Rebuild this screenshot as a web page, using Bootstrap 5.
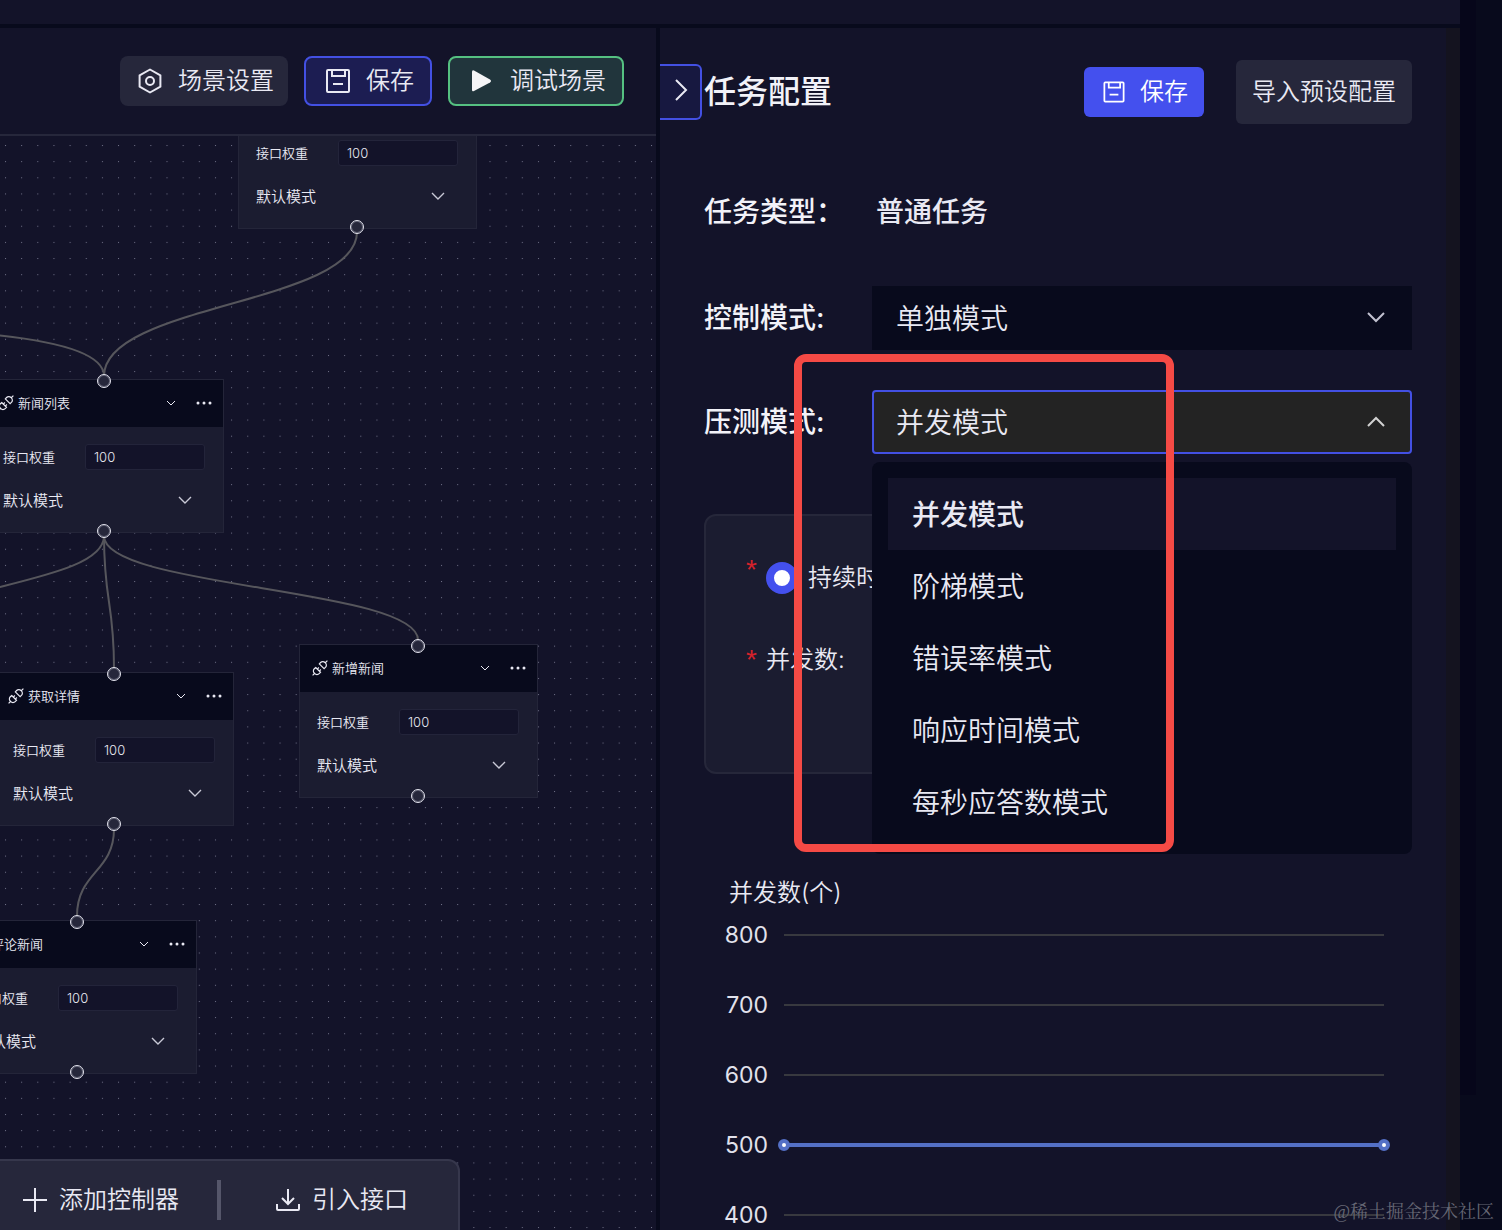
<!DOCTYPE html>
<html lang="zh-CN">
<head>
<meta charset="utf-8">
<meta name="viewport" content="width=device-width, initial-scale=1">
<title>场景管理 - 任务配置</title>
<link href="https://cdn.jsdelivr.net/npm/bootstrap@5.3.0/dist/css/bootstrap.min.css" rel="stylesheet">
<style>
:root{--bg:#131329;--deep:#080a1c;--panel:#1b1c30;--soft:#26273b;--ink:#e9e9f3;--blue:#4350e3}
body{background:var(--deep);color:var(--ink);font-family:Inter,"Noto Sans CJK SC",sans-serif;font-weight:350;font-size:24px;line-height:32px}
svg{display:block;flex:none}
.app{height:100vh;overflow:hidden}
.app-main{gap:4px;min-width:0}
.topbar{height:24px;background:var(--bg)}
.gutter{width:42px}
.gutter-shade{width:16px;height:1095px;background:#06061a}
.workspace{gap:4px;min-height:0}
.surface{background:var(--bg)}
.toolbar{height:108px;border-bottom:2px solid var(--soft);padding:0 32px 0 16px}
.tool-btn{--bs-btn-color:var(--ink);--bs-btn-hover-color:#fff;--bs-btn-border-radius:8px;font-size:24px;line-height:32px;font-weight:350;height:50px;padding:0 14px;gap:12px;border:0;background:var(--soft)}
.btn-save{background:#1c1d52;border:2px solid var(--blue);padding:0 16px}
.btn-run{background:#21353c;border:2px solid #55c081;padding:0 16px}
.btn-solid{background:#4450ee;color:#fff;padding:0 16px;border-radius:6px}
.btn-import{height:64px;padding:0 16px;border-radius:6px;margin-left:32px}
.board{min-height:0}
.board-lines{position:absolute;inset:0;width:100%;height:100%}
.flow-node{position:absolute;width:239px;height:154px;background:var(--panel);border:1px solid #242539;font-size:13px;line-height:20px}
.node-head{height:47px;background:var(--deep);padding:0 11px 0 12px}
.node-icon{margin-right:4px}
.icon-btn{background:none;border:0;padding:0;color:inherit}
.node-form{padding:17px 18px 0 17px}
.weight-box{width:120px;height:26px;background:var(--bg);border:1px solid #23243a;border-radius:3px;color:var(--ink);font-size:13px;font-weight:350;padding:0 8px}
.mode-pick{margin-top:19px;height:24px;width:100%;appearance:none;border:0;color:var(--ink);font-size:15px;font-weight:350;padding:0;background:transparent url("data:image/svg+xml,%3Csvg xmlns='http://www.w3.org/2000/svg' width='14' height='8' fill='none' stroke='%23c9c9d6' stroke-width='1.4'%3E%3Cpath d='M1 1l6 6 6-6'/%3E%3C/svg%3E") no-repeat right 13px top 7px}
.port{position:absolute;left:111px;width:14px;height:14px;border:1px solid #e4e4ee;box-shadow:inset 0 0 0 1px #5c5d70;border-radius:50%;background:var(--soft)}
.port-in{top:-6px}.port-out{bottom:-6px}
.at-root{left:238px;top:-61px}
.at-list{left:-15px;top:243px}
.at-detail{left:-5px;top:536px}
.at-create{left:299px;top:508px}
.at-comment{left:-42px;top:784px}
.dock{position:absolute;left:0;bottom:0;height:71px;padding:19px 50px 10px 20px;background:var(--soft);border:solid #36374c;border-width:2px 2px 0 0;border-radius:0 12px 0 0}
.dock .tool-btn{height:40px;padding:0;background:none;gap:9px}
.dock-rule{width:4px;height:40px;background:#55566a;margin:0 52px 0 38px}
.config{flex:0 0 800px;padding:32px 34px 0 44px;border-right:14px solid #14131f}
.fold-btn{position:absolute;left:0;top:36px;width:42px;height:56px;background:#171840;border:2px solid var(--blue);border-left:0;border-radius:0 6px 6px 0;padding:0 0 4px 12px;color:var(--ink)}
.config-title{font-size:32px;line-height:48px;font-weight:500;margin:0;color:#f2f2f8}
.task-row{margin-top:56px;margin-bottom:42px}
.form-line{min-height:64px;font-size:28px;line-height:40px}
.line-label{width:168px;font-weight:500;color:#f2f2f8;flex:none}
.line-value{font-weight:500;padding-left:4px}
.big-select{flex:1;height:64px;appearance:none;background:var(--deep) url("data:image/svg+xml,%3Csvg xmlns='http://www.w3.org/2000/svg' width='18' height='11' fill='none' stroke='%23c2c2d0' stroke-width='2'%3E%3Cpath d='M1 1l8 8 8-8'/%3E%3C/svg%3E") no-repeat right 25px center;border:2px solid var(--deep);color:var(--ink);font-size:28px;font-weight:350;padding:2px 22px 0}
.big-select.is-open{background-color:#232323;border-color:var(--blue);border-radius:4px;background-image:url("data:image/svg+xml,%3Csvg xmlns='http://www.w3.org/2000/svg' width='18' height='11' fill='none' stroke='%23d2d2d2' stroke-width='2'%3E%3Cpath d='M1 10l8-8 8 8'/%3E%3C/svg%3E")}
.pick-line{margin-top:40px;margin-bottom:60px}
.pick-menu{position:absolute;left:168px;right:0;top:72px;background:var(--deep);border-radius:8px;padding:16px;z-index:2;list-style:none;margin:0}
.pick-menu li{height:72px;padding:17px 24px 15px}
.pick-menu .chosen{background:var(--bg);font-weight:500}
.params{height:260px;background:var(--panel);border:2px solid #26273a;border-radius:12px;padding:46px 40px 0}
.param-line{height:32px;margin-bottom:50px}
.must{width:20px;color:#d5222b;font:28px/32px "Liberation Sans",sans-serif}
.radio-dot{appearance:none;width:32px;height:32px;border:8px solid #4450ee;border-radius:50%;background:#fff;margin:0 10px 0 0;flex:none}
.chart-title{margin:103px 0 0 25px}
.axis-row{height:70px;gap:16px;padding-right:28px}
.axis-first{margin-top:-9px}
.axis-tick{width:64px;text-align:right;font-size:23px;font-weight:400;color:#e2e2ec}
.axis-rule{flex:1;height:2px;background:#38393f}
.series{height:4px;background:#5470c6;position:relative}
.series i{position:absolute;top:-4px;width:12px;height:12px;border:4px solid #5470c6;border-radius:50%;background:#fff}
.series i:first-child{left:-6px}.series i:last-child{right:-6px}
.focus-frame{position:absolute;left:134px;top:326px;width:380px;height:498px;border:8px solid #f54a45;border-radius:12px;z-index:3;pointer-events:none}
.watermark{position:absolute;right:8px;bottom:5px;font:18px/26px "Liberation Serif","Noto Serif CJK SC","Noto Sans CJK SC",serif;color:#666774;z-index:4}
</style>
</head>
<body>
<svg width="0" height="0" class="position-absolute" aria-hidden="true">
  <symbol id="i-save" viewBox="0 0 32 32"><g fill="none" stroke="currentColor" stroke-width="2"><rect x="5" y="5" width="22" height="22" rx="1"/><path d="M10 5v6h13V5M11 19h10"/></g></symbol>
  <symbol id="i-plug" viewBox="0 0 16 16"><g fill="none" stroke="currentColor" stroke-width="1.2"><path d="M5.1 6.1l4.8 4.8-1.3 1.3a3.1 3.1 0 0 1-4.5 0l-.4-.4a3.1 3.1 0 0 1 0-4.4z" transform="translate(-1.4 1.4)"/><path d="M6.1 5.1l4.8 4.8 1.3-1.3a3.1 3.1 0 0 0 0-4.5l-.4-.4a3.1 3.1 0 0 0-4.4 0z" transform="translate(1.2 -1.2)"/><path d="M13 3l2.400-2.400M3 13L.600 15.400M5.200 9.200l1.700-1.700M7.200 11.200l1.700-1.700"/></g></symbol>
  <symbol id="i-down" viewBox="0 0 10 6"><path d="M1 1l4 4 4-4" fill="none" stroke="currentColor"/></symbol>
  <symbol id="i-more" viewBox="0 0 16 4"><g fill="currentColor"><circle cx="2" cy="2" r="1.500"/><circle cx="8" cy="2" r="1.500"/><circle cx="14" cy="2" r="1.500"/></g></symbol>
</svg>

<div class="app d-flex position-relative">
  <div class="app-main flex-grow-1 d-flex flex-column">
    <header class="topbar"></header>
    <div class="workspace d-flex flex-grow-1">

      <section class="surface flex-grow-1 d-flex flex-column overflow-hidden">
        <div class="toolbar d-flex align-items-center justify-content-end gap-3 flex-shrink-0">
          <button type="button" class="btn tool-btn d-flex align-items-center"><svg width="32" height="32" viewBox="0 0 32 32" fill="none" stroke="currentColor" stroke-width="2"><path d="M16 4.500l10.400 5.800v11.400L16 27.500 5.600 21.700V10.300z" stroke-linejoin="round"/><circle cx="16" cy="16" r="4"/></svg>场景设置</button>
          <button type="button" class="btn tool-btn btn-save d-flex align-items-center"><svg width="32" height="32"><use href="#i-save"/></svg>保存</button>
          <button type="button" class="btn tool-btn btn-run d-flex align-items-center"><svg width="32" height="32" viewBox="0 0 32 32"><path d="M6 7v18q0 2 2 1l16-8.500q2-1.500 0-3L8 5.500q-2-1-2 1.500z" fill="#f5f5f7"/></svg>调试场景</button>
        </div>

        <div class="board flex-grow-1 position-relative overflow-hidden">
          <svg class="board-lines" aria-hidden="true">
            <defs><pattern id="dots" x="5" y="9" width="16.150" height="16.150" patternUnits="userSpaceOnUse"><rect width="1" height="1" fill="#73748a"/></pattern></defs>
            <rect width="100%" height="100%" fill="url(#dots)"/>
            <g transform="translate(0 -136)" fill="none" stroke="#56565c" stroke-width="2">
              <path d="M357 232C357 304 104 304 104 376"/>
              <path d="M-40 332C20 336 104 346 104 376"/>
              <path d="M104 536C104 586 -96 586 -96 636"/>
              <path d="M104 536C104 602 114 602 114 668"/>
              <path d="M104 536C104 588 418 588 418 640"/>
              <path d="M114 829C114 872 77 872 77 916"/>
            </g>
          </svg>

          <article class="flow-node at-root">
            <div class="node-head"></div>
            <div class="node-form">
              <div class="d-flex align-items-center justify-content-between"><label for="w1">接口权重</label><input id="w1" class="weight-box" value="100"></div>
              <select class="mode-pick" aria-label="模式"><option>默认模式</option></select>
            </div>
            <span class="port port-out"></span>
          </article>

          <article class="flow-node at-list">
            <div class="node-head d-flex align-items-center"><svg class="node-icon" width="16" height="16"><use href="#i-plug"/></svg><span>新闻列表</span>
              <button type="button" class="icon-btn ms-auto me-3" aria-label="展开"><svg width="10" height="6"><use href="#i-down"/></svg></button><button type="button" class="icon-btn ms-1" aria-label="更多"><svg width="16" height="4"><use href="#i-more"/></svg></button></div>
            <div class="node-form">
              <div class="d-flex align-items-center justify-content-between"><label for="w2">接口权重</label><input id="w2" class="weight-box" value="100"></div>
              <select class="mode-pick" aria-label="模式"><option>默认模式</option></select>
            </div>
            <span class="port port-in"></span><span class="port port-out"></span>
          </article>

          <article class="flow-node at-detail">
            <div class="node-head d-flex align-items-center"><svg class="node-icon" width="16" height="16"><use href="#i-plug"/></svg><span>获取详情</span>
              <button type="button" class="icon-btn ms-auto me-3" aria-label="展开"><svg width="10" height="6"><use href="#i-down"/></svg></button><button type="button" class="icon-btn ms-1" aria-label="更多"><svg width="16" height="4"><use href="#i-more"/></svg></button></div>
            <div class="node-form">
              <div class="d-flex align-items-center justify-content-between"><label for="w3">接口权重</label><input id="w3" class="weight-box" value="100"></div>
              <select class="mode-pick" aria-label="模式"><option>默认模式</option></select>
            </div>
            <span class="port port-in"></span><span class="port port-out"></span>
          </article>

          <article class="flow-node at-create">
            <div class="node-head d-flex align-items-center"><svg class="node-icon" width="16" height="16"><use href="#i-plug"/></svg><span>新增新闻</span>
              <button type="button" class="icon-btn ms-auto me-3" aria-label="展开"><svg width="10" height="6"><use href="#i-down"/></svg></button><button type="button" class="icon-btn ms-1" aria-label="更多"><svg width="16" height="4"><use href="#i-more"/></svg></button></div>
            <div class="node-form">
              <div class="d-flex align-items-center justify-content-between"><label for="w4">接口权重</label><input id="w4" class="weight-box" value="100"></div>
              <select class="mode-pick" aria-label="模式"><option>默认模式</option></select>
            </div>
            <span class="port port-in"></span><span class="port port-out"></span>
          </article>

          <article class="flow-node at-comment">
            <div class="node-head d-flex align-items-center"><svg class="node-icon" width="16" height="16"><use href="#i-plug"/></svg><span>评论新闻</span>
              <button type="button" class="icon-btn ms-auto me-3" aria-label="展开"><svg width="10" height="6"><use href="#i-down"/></svg></button><button type="button" class="icon-btn ms-1" aria-label="更多"><svg width="16" height="4"><use href="#i-more"/></svg></button></div>
            <div class="node-form">
              <div class="d-flex align-items-center justify-content-between"><label for="w5">接口权重</label><input id="w5" class="weight-box" value="100"></div>
              <select class="mode-pick" aria-label="模式"><option>默认模式</option></select>
            </div>
            <span class="port port-in"></span><span class="port port-out"></span>
          </article>

          <div class="dock d-flex align-items-center">
            <button type="button" class="btn tool-btn d-flex align-items-center"><svg width="30" height="30" viewBox="0 0 30 30" stroke="currentColor" stroke-width="2"><path d="M15 3v24M3 15h24"/></svg>添加控制器</button>
            <span class="dock-rule"></span>
            <button type="button" class="btn tool-btn d-flex align-items-center"><svg width="30" height="30" viewBox="0 0 30 30" fill="none" stroke="currentColor" stroke-width="2"><path d="M15 4v15M9 13l6 6 6-6M4 19v5q0 1 1 1h20q1 0 1-1v-5"/></svg>引入接口</button>
          </div>
        </div>
      </section>

      <aside class="config surface position-relative">
        <button type="button" class="fold-btn" aria-label="收起"><svg width="18" height="24" viewBox="0 0 18 24" fill="none" stroke="currentColor" stroke-width="2"><path d="M4 2l10 10L4 22"/></svg></button>
        <div class="d-flex align-items-center">
          <h1 class="config-title me-auto">任务配置</h1>
          <button type="button" class="btn tool-btn btn-solid d-flex align-items-center"><svg width="28" height="28"><use href="#i-save"/></svg>保存</button>
          <button type="button" class="btn tool-btn btn-import">导入预设配置</button>
        </div>

        <div class="form-line task-row d-flex align-items-center"><span class="line-label">任务类型：</span><span class="line-value">普通任务</span></div>
        <div class="form-line d-flex align-items-center">
          <label class="line-label" for="control">控制模式:</label>
          <select id="control" class="big-select"><option>单独模式</option></select>
        </div>
        <div class="form-line pick-line d-flex align-items-center position-relative">
          <label class="line-label" for="press">压测模式:</label>
          <select id="press" class="big-select is-open"><option>并发模式</option></select>
          <ul class="pick-menu" role="listbox" aria-label="压测模式">
            <li class="chosen" role="option" aria-selected="true">并发模式</li>
            <li role="option">阶梯模式</li>
            <li role="option">错误率模式</li>
            <li role="option">响应时间模式</li>
            <li role="option">每秒应答数模式</li>
          </ul>
        </div>

        <div class="params">
          <div class="param-line d-flex align-items-center"><span class="must pb-3">*</span><input class="radio-dot" type="radio" name="span" id="span" checked><label for="span">持续时</label></div>
          <div class="param-line d-flex align-items-center"><span class="must">*</span><span>并发数:</span></div>
        </div>

        <div class="chart-title">并发数(个)</div>
        <div class="axis-row axis-first d-flex align-items-center"><span class="axis-tick">800</span><div class="axis-rule"></div></div>
        <div class="axis-row d-flex align-items-center"><span class="axis-tick">700</span><div class="axis-rule"></div></div>
        <div class="axis-row d-flex align-items-center"><span class="axis-tick">600</span><div class="axis-rule"></div></div>
        <div class="axis-row d-flex align-items-center"><span class="axis-tick">500</span><div class="axis-rule series"><i></i><i></i></div></div>
        <div class="axis-row d-flex align-items-center"><span class="axis-tick">400</span><div class="axis-rule"></div></div>
        <div class="focus-frame"></div>
      </aside>
    </div>
  </div>
  <div class="gutter flex-shrink-0"><div class="gutter-shade"></div></div>
  <div class="watermark">@稀土掘金技术社区</div>
</div>
<script src="https://cdn.jsdelivr.net/npm/bootstrap@5.3.0/dist/js/bootstrap.bundle.min.js"></script>
</body>
</html>
